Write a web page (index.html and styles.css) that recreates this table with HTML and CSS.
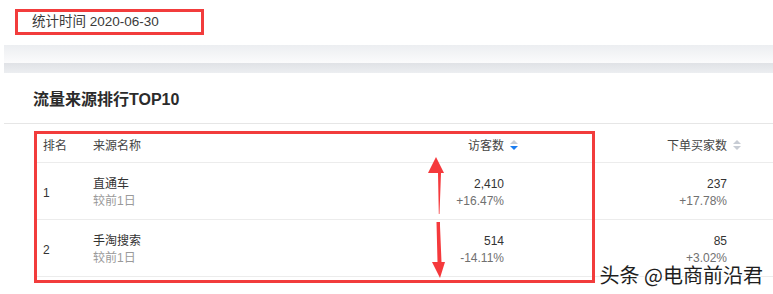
FILE: index.html
```html
<!DOCTYPE html>
<html lang="zh">
<head>
<meta charset="utf-8">
<link rel="stylesheet" href="styles.css">
</head>
<body>
<header class="top">
  <div class="stamp">统计时间 2020-06-30</div>
</header>
<div class="shade"></div>
<div class="band"></div>
<section class="card">
  <h2 class="title">流量来源排行TOP10</h2>
  <div class="table-wrap">
    <div class="table">
      <div class="row head">
        <div class="c-rank">排名</div>
        <div class="c-name">来源名称</div>
        <div class="c-num">访客数<svg class="sort" width="8" height="10" viewBox="0 0 8 10"><path d="M4 0 L8 4 L0 4 Z" fill="#c7ccd4"/><path d="M0 6 L8 6 L4 10 Z" fill="#1a7cf0"/></svg></div>
        <div class="c-num">下单买家数<svg class="sort" width="8" height="10" viewBox="0 0 8 10"><path d="M4 0 L8 4 L0 4 Z" fill="#c7ccd4"/><path d="M0 6 L8 6 L4 10 Z" fill="#c7ccd4"/></svg></div>
        <div class="c-rest"></div>
      </div>
      <div class="row">
        <div class="c-rank">1</div>
        <div class="c-name"><div class="main">直通车</div><div class="sub">较前1日</div></div>
        <div class="c-num"><div class="main">2,410</div><div class="pct">+16.47%</div></div>
        <div class="c-num"><div class="main">237</div><div class="pct">+17.78%</div></div>
        <div class="c-rest"></div>
      </div>
      <div class="row">
        <div class="c-rank">2</div>
        <div class="c-name"><div class="main">手淘搜索</div><div class="sub">较前1日</div></div>
        <div class="c-num"><div class="main">514</div><div class="pct">-14.11%</div></div>
        <div class="c-num"><div class="main">85</div><div class="pct">+3.02%</div></div>
        <div class="c-rest"></div>
      </div>
    </div>
    <div class="mark-box"></div>
    <svg class="arrows" width="30" height="130" viewBox="0 0 30 130">
      <path d="M11 0 L19 16 L16 16 L14.5 57 L13.8 57 L13 16 L3 16 Z" fill="#f5393c"/>
      <path d="M11.5 0 L15 0 L15 4 L16.5 40 L20 40 L15 56 L7 40 L12.5 40 Z" fill="#f5393c" transform="translate(0,65)"/>
    </svg>
  </div>
  <div class="watermark">头条 @电商前沿君</div>
</section>
</body>
</html>
```

FILE: styles.css
```css
* { box-sizing: border-box; }
html, body { margin: 0; padding: 0; background: #fff; }
body {
  width: 773px;
  height: 294px;
  overflow: hidden;
  font-family: "Liberation Sans", "Noto Sans CJK SC", sans-serif;
  color: #333;
  position: relative;
}

.top {
  height: 45px;
  padding: 9px 0 0 15px;
}
.stamp {
  width: 189px;
  height: 26px;
  border: 3px solid #f23c3c;
  padding-left: 14px;
  font-size: 13.5px;
  line-height: 20px;
  color: #3a3a3a;
}

.shade {
  margin-left: 4px;
  height: 18px;
  background: linear-gradient(#eceef1, #fbfbfc);
}
.band {
  margin-left: 4px;
  height: 10px;
  background: linear-gradient(#e0e2e6, #eceef1);
}

.card {
  margin-left: 4px;
  position: relative;
}
.title {
  margin: 0;
  height: 51px;
  padding: 17px 0 0 29px;
  font-size: 16px;
  line-height: 20px;
  font-weight: bold;
  color: #2b2b2b;
  border-bottom: 1px solid #e6e6e6;
}

.table-wrap {
  position: relative;
  margin-left: 33px;
}
.table {
  display: flex;
  flex-direction: column;
}
.row {
  display: grid;
  grid-template-columns: 56px 307px 124px 223px 1fr;
  height: 57px;
  padding-top: 3px;
  border-bottom: 1px solid #ececec;
  align-items: center;
  font-size: 12px;
}
.row.head {
  height: 39px;
  padding-top: 2px;
  color: #444;
}
.c-rank { padding-left: 6px; }
.c-num {
  text-align: right;
  padding-right: 20px;
  position: relative;
}
.sort {
  position: absolute;
  right: 6px;
  top: 50%;
  margin-top: -4px;
}
.main { line-height: 17px; color: #333; }
.sub { line-height: 17px; color: #9a9a9a; }
.pct { line-height: 17px; color: #707070; }

.mark-box {
  position: absolute;
  left: -3px;
  top: 7px;
  width: 561px;
  height: 152px;
  border: 3px solid #f23c3c;
}
.arrows {
  position: absolute;
  left: 388px;
  top: 33px;
}

.watermark {
  position: absolute;
  right: 10px;
  top: 190px;
  font-family: "Noto Sans CJK SC", sans-serif;
  font-size: 20px;
  line-height: 24px;
  color: #1e1e1e;
  text-shadow: 0 0 2px #fff, 0 0 2px #fff, 1px 1px 0 #fff, -1px -1px 0 #fff;
}
```
